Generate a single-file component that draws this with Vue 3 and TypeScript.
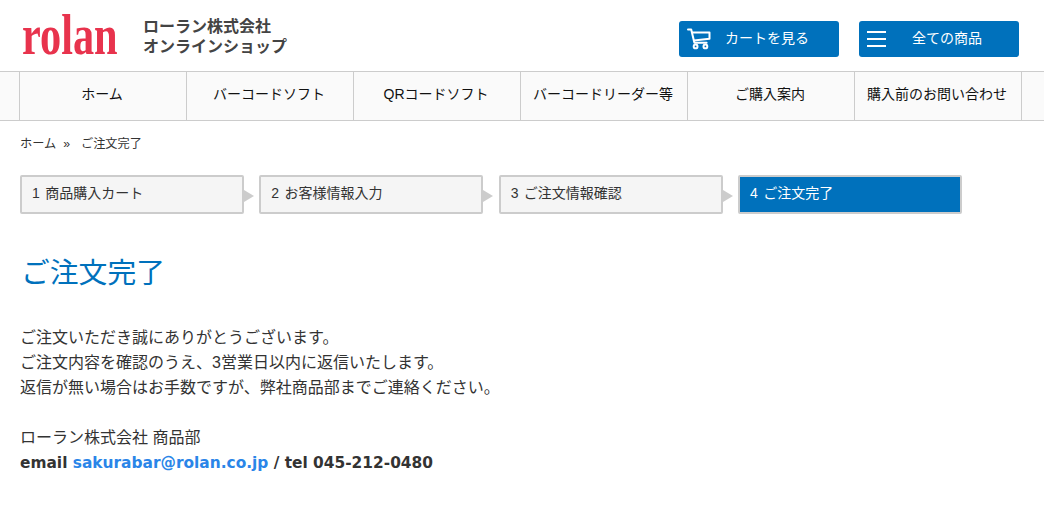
<script setup lang="ts">
const navItems: string[] = ['ホーム', 'バーコードソフト', 'QRコードソフト', 'バーコードリーダー等', 'ご購入案内', '購入前のお問い合わせ']
const steps: string[] = ['1 商品購入カート', '2 お客様情報入力', '3 ご注文情報確認', '4 ご注文完了']
</script>

<template>
  <div class="page">
    <header class="top">
      <div class="brand">
        <svg class="logo" width="100" height="70" viewBox="0 0 137 70" preserveAspectRatio="none" role="img" aria-label="rolan">
          <text x="2.7" y="54" class="logo-text">rolan</text>
        </svg>
        <div class="company">ローラン株式会社<br />オンラインショップ</div>
      </div>
      <div class="actions">
        <a class="btn btn-cart">
          <svg width="24" height="22" viewBox="0 0 24 22" fill="none" stroke="#fff" stroke-width="2">
            <path d="M1 1.5h3.2l3.2 13.2h12.2" stroke-linecap="round" stroke-linejoin="round" />
            <path d="M5 4.5h17.5v6.2L7 12.4" stroke-linejoin="round" />
            <circle cx="8.6" cy="18.4" r="1.9" />
            <circle cx="18.4" cy="18.4" r="1.9" />
          </svg>
          <span>カートを見る</span>
        </a>
        <a class="btn btn-all">
          <span class="burger"><i></i><i></i><i></i></span>
          <span>全ての商品</span>
        </a>
      </div>
    </header>

    <nav class="nav">
      <ul>
        <li v-for="item in navItems" :key="item">{{ item }}</li>
      </ul>
    </nav>

    <main class="content">
      <div class="crumbs"><span>ホーム</span><span class="sep">»</span><span>ご注文完了</span></div>

      <ol class="steps">
        <li v-for="(s, i) in steps" :key="s" class="step" :class="{ active: i === 3 }">{{ s }}</li>
      </ol>

      <h1>ご注文完了</h1>

      <p class="msg">
        ご注文いただき誠にありがとうございます。<br />
        ご注文内容を確認のうえ、3営業日以内に返信いたします。<br />
        返信が無い場合はお手数ですが、弊社商品部までご連絡ください。
      </p>
      <p class="msg sign">
        ローラン株式会社 商品部<br />
        <b class="contact">email <a class="mail">sakurabar@rolan.co.jp</a> / tel 045-212-0480</b>
      </p>
    </main>
  </div>
</template>

<style>
html, body { margin: 0; background: #fff; }
</style>

<style scoped>
.page {
  width: 1044px;
  height: 520px;
  overflow: hidden;
  font-family: "Liberation Sans", "Noto Sans CJK JP", sans-serif;
  color: #333;
}
.top {
  height: 71px;
  display: flex;
  justify-content: space-between;
  padding: 0 25px 0 20px;
  box-sizing: border-box;
}
.brand { display: flex; align-items: flex-start; }
.logo { display: block; }
.logo-text {
  font-family: "Liberation Serif", serif;
  font-size: 58px;
  font-weight: 700;
  fill: #e8334d;
}
.company {
  margin: 17px 0 0 23px;
  font-size: 16px;
  line-height: 20px;
  font-weight: 700;
  color: #444;
}
.actions { display: flex; gap: 20px; padding-top: 21px; }
.btn {
  width: 160px;
  height: 36px;
  box-sizing: border-box;
  padding-left: 8px;
  background: #0071bc;
  border-radius: 3px;
  color: #fff;
  font-size: 14px;
  display: flex;
  align-items: center;
}
.btn > span:last-child { margin-bottom: 4px; }
.btn-cart > span:last-child { margin-left: 14px; }
.btn-all > span:last-child { margin-left: 26px; }
.burger { width: 19px; display: flex; flex-direction: column; gap: 4.5px; }
.burger i { display: block; height: 2.5px; background: #fff; }
.nav {
  height: 50px;
  box-sizing: border-box;
  background: #fafafa;
  border-top: 1px solid #ccc;
  border-bottom: 1px solid #ccc;
  padding-left: 19px;
}
.nav ul {
  display: flex;
  list-style: none;
  margin: 0;
  padding: 0;
  height: 100%;
  border-left: 1px solid #ccc;
  width: 1002px;
}
.nav li {
  width: 167px;
  box-sizing: border-box;
  padding: 0 2px 6px 0;
  border-right: 1px solid #ccc;
  display: flex;
  align-items: center;
  justify-content: center;
  font-size: 14px;
  color: #111;
  white-space: nowrap;
}
.content { padding: 0 20px; }
.crumbs {
  display: flex;
  font-size: 12.2px;
  line-height: 16px;
  padding-top: 15px;
  color: #333;
}
.crumbs .sep { margin: 0 11px 0 7px; }
.steps {
  display: flex;
  list-style: none;
  margin: 23px 0 0;
  padding: 0;
  gap: 15.33px;
}
.step {
  width: 224px;
  height: 39px;
  box-sizing: border-box;
  background: #f5f5f5;
  border: 2px solid #ccc;
  border-radius: 2px;
  font-size: 14px;
  word-spacing: 1.5px;
  line-height: 32px;
  padding-left: 10px;
  position: relative;
  color: #333;
}
.step:not(:last-child)::after {
  content: "";
  position: absolute;
  right: -12px;
  top: 13px;
  border-left: 10px solid #ccc;
  border-top: 6px solid transparent;
  border-bottom: 6px solid transparent;
}
.step.active { background: #0071bc; color: #fff; }
h1 {
  margin: 39px 0 0 1px;
  font-size: 28.8px;
  line-height: 40px;
  font-weight: 400;
  color: #0071bc;
}
.msg {
  margin: 0;
  font-size: 16px;
  line-height: 25px;
  color: #333;
}
h1 + .msg { margin-top: 32px; }
.sign { margin-top: 25px; }
.contact { font-family: "DejaVu Sans", "Noto Sans CJK JP", sans-serif; font-size: 15.4px; }
.mail { color: #2a85e8; }
</style>
